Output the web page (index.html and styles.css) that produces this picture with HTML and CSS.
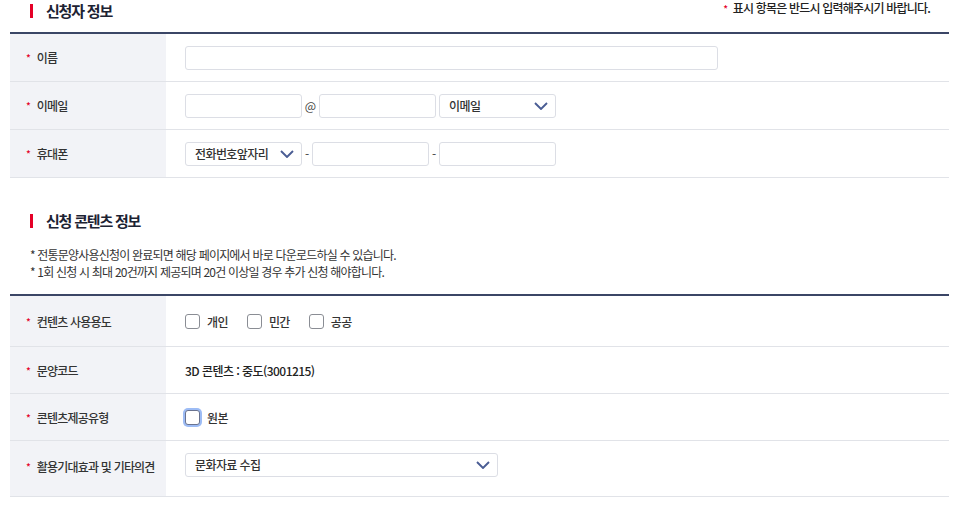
FILE: index.html
```html
<!DOCTYPE html>
<html lang="ko">
<head>
<meta charset="utf-8">
<link rel="stylesheet" href="styles.css">
</head>
<body>
<div class="page">
  <div class="sec-head">
    <h2 class="sec-title">신청자 정보</h2>
    <p class="req-note"><span class="star">*</span> 표시 항목은 반드시 입력해주시기 바랍니다.</p>
  </div>
  <div class="form-table">
    <div class="row">
      <div class="th"><span class="star">*</span>이름</div>
      <div class="td"><span class="input w-name"></span></div>
    </div>
    <div class="row">
      <div class="th"><span class="star">*</span>이메일</div>
      <div class="td">
        <span class="input w-s"></span>
        <span class="sep at">@</span>
        <span class="input w-s"></span>
        <span class="select w-s ml3"><span class="sel-text">이메일</span><svg class="chev" viewBox="0 0 14 8"><path d="M1 1 L7 7 L13 1" /></svg></span>
      </div>
    </div>
    <div class="row">
      <div class="th"><span class="star">*</span>휴대폰</div>
      <div class="td">
        <span class="select w-s"><span class="sel-text">전화번호앞자리</span><svg class="chev" viewBox="0 0 14 8"><path d="M1 1 L7 7 L13 1" /></svg></span>
        <span class="sep dash">-</span>
        <span class="input w-s"></span>
        <span class="sep dash">-</span>
        <span class="input w-s"></span>
      </div>
    </div>
  </div>

  <div class="sec-head sec2">
    <h2 class="sec-title">신청 콘텐츠 정보</h2>
  </div>
  <ul class="notes">
    <li>* 전통문양사용신청이 완료되면 해당 페이지에서 바로 다운로드하실 수 있습니다.</li>
    <li>* 1회 신청 시 최대 20건까지 제공되며 20건 이상일 경우 추가 신청 해야합니다.</li>
  </ul>
  <div class="form-table t2">
    <div class="row r-check">
      <div class="th"><span class="star">*</span>컨텐츠 사용용도</div>
      <div class="td">
        <label class="chk"><span class="box"></span>개인</label>
        <label class="chk"><span class="box"></span>민간</label>
        <label class="chk"><span class="box"></span>공공</label>
      </div>
    </div>
    <div class="row r-text">
      <div class="th"><span class="star">*</span>문양코드</div>
      <div class="td"><span class="val">3D 콘텐츠 : 중도(3001215)</span></div>
    </div>
    <div class="row r-text">
      <div class="th"><span class="star">*</span>콘텐츠제공유형</div>
      <div class="td">
        <label class="chk"><span class="box focus"></span>원본</label>
      </div>
    </div>
    <div class="row r-last">
      <div class="th"><span class="star">*</span>활용기대효과 및 기타의견</div>
      <div class="td"><span class="select w-l"><span class="sel-text">문화자료 수집</span><svg class="chev" viewBox="0 0 14 8"><path d="M1 1 L7 7 L13 1" /></svg></span></div>
    </div>
  </div>
</div>
</body>
</html>
```

FILE: styles.css
```css
* { box-sizing: border-box; margin: 0; padding: 0; }
html, body { background: #fff; }
body {
  font-family: "Noto Sans CJK KR", "Noto Sans", sans-serif;
  color: #222;
  font-size: 12px;
}
.page { padding: 0 17px 0 10px; }

.sec-head {
  height: 32px;
  display: flex;
  justify-content: space-between;
  align-items: flex-start;
  padding: 0 19px 0 20px;
}
.sec-title {
  position: relative;
  padding-left: 16px;
  font-size: 15px;
  font-weight: 700;
  line-height: 22px;
  color: #1d2333;
  letter-spacing: -1.2px;
}
.sec-title::before {
  content: "";
  position: absolute;
  left: 0;
  top: 4px;
  width: 3px;
  height: 14px;
  background: #e50027;
}
.req-note {
  font-size: 12px;
  line-height: 16px;
  color: #222;
  font-weight: 500;
  letter-spacing: -0.8px;
}
.star { color: #e50027; font-size: 10px; margin-right: 6px; letter-spacing: 0; }
.req-note .star { margin-right: 2px; }

.form-table { border-top: 2px solid #3b4666; }
.row {
  display: flex;
  height: 48px;
  border-bottom: 1px solid #e1e3e8;
}
.th {
  width: 156px;
  flex: none;
  background: #f2f3f7;
  display: flex;
  align-items: center;
  padding-left: 16px;
  font-weight: 500;
  color: #333;
  letter-spacing: -0.8px;
}
.td {
  flex: 1;
  display: flex;
  align-items: center;
  padding-left: 19px;
}

.input, .select {
  display: inline-flex;
  align-items: center;
  height: 24px;
  border: 1px solid #dcdee5;
  border-radius: 3px;
  background: #fff;
  flex: none;
}
.w-name { width: 533px; }
.w-s { width: 117px; }
.w-l { width: 313px; }
.ml3 { margin-left: 3px; }
.select { justify-content: space-between; padding: 0 7px 0 9px; }
.sel-text { color: #333; letter-spacing: -0.6px; font-weight: 500; }
.chev { width: 14px; height: 8px; }
.chev path { fill: none; stroke: #4a5d94; stroke-width: 1.9; }
.sep { color: #444; }
.at { width: 17px; text-align: center; font-size: 12px; }
.dash { width: 10px; text-align: center; }

.sec2 { margin-top: 32px; height: 36px; }
.notes {
  list-style: none;
  padding-left: 20px;
  font-size: 12px;
  line-height: 17px;
  color: #333;
  letter-spacing: -0.8px;
}
.t2 { margin-top: 14px; }
.r-check { height: 51px; }
.r-text { height: 47px; }
.r-last { height: 56px; }
.r-last .th { padding-bottom: 5px; }
.r-last .td { padding-bottom: 8px; }

.chk {
  display: inline-flex;
  align-items: center;
  margin-right: 19px;
  color: #333;
  font-weight: 500;
  letter-spacing: -0.6px;
}
.box {
  width: 15px;
  height: 15px;
  border: 1.5px solid #8a8d94;
  border-radius: 3px;
  margin-right: 7px;
  background: #fff;
}
.box.focus { box-shadow: 0 0 0 2px #9dbcf5; border-color: #6a7390; }
.val { color: #222; letter-spacing: -0.55px; font-weight: 500; }
```
